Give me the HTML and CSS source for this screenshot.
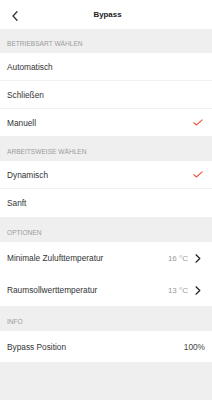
FILE: index.html
```html
<!DOCTYPE html>
<html lang="de">
<head>
<meta charset="utf-8">
<title>Bypass</title>
<link rel="stylesheet" href="styles.css">
</head>
<body>
<div class="app">
  <header class="nav">
    <svg class="back" width="6" height="10" viewBox="0 0 6 10"><path d="M5 0.8 L1 5 L5 9.2" fill="none" stroke="#333" stroke-width="1.3" stroke-linecap="round" stroke-linejoin="round"/></svg>
    <div class="title">Bypass</div>
  </header>

  <div class="sec first">BETRIEBSART WÄHLEN</div>
  <div class="group">
    <div class="row"><span class="label">Automatisch</span></div>
    <div class="row"><span class="label">Schließen</span></div>
    <div class="row short"><span class="label">Manuell</span><svg class="check" width="10" height="7" viewBox="0 0 10 7"><path d="M0.8 3.6 L3.4 6 L9.2 0.8" fill="none" stroke="#f2553a" stroke-width="1.1" stroke-linecap="round" stroke-linejoin="round"/></svg></div>
  </div>

  <div class="sec">ARBEITSWEISE WÄHLEN</div>
  <div class="group">
    <div class="row"><span class="label">Dynamisch</span><svg class="check" width="10" height="7" viewBox="0 0 10 7"><path d="M0.8 3.6 L3.4 6 L9.2 0.8" fill="none" stroke="#f2553a" stroke-width="1.1" stroke-linecap="round" stroke-linejoin="round"/></svg></div>
    <div class="row last"><span class="label">Sanft</span></div>
  </div>

  <div class="sec">OPTIONEN</div>
  <div class="group">
    <div class="row tall"><span class="label">Minimale Zulufttemperatur</span><span class="val">16 °C</span><svg class="chev" width="6" height="9" viewBox="0 0 6 9"><path d="M1 0.8 L4.8 4.5 L1 8.2" fill="none" stroke="#222" stroke-width="1.2" stroke-linecap="round" stroke-linejoin="round"/></svg></div>
    <div class="row tall"><span class="label">Raumsollwerttemperatur</span><span class="val">13 °C</span><svg class="chev" width="6" height="9" viewBox="0 0 6 9"><path d="M1 0.8 L4.8 4.5 L1 8.2" fill="none" stroke="#222" stroke-width="1.2" stroke-linecap="round" stroke-linejoin="round"/></svg></div>
  </div>

  <div class="sec">INFO</div>
  <div class="group">
    <div class="row info"><span class="label">Bypass Position</span><span class="val dark">100%</span></div>
  </div>
</div>
</body>
</html>
```

FILE: styles.css
```css
* { box-sizing: border-box; }
html, body { margin: 0; padding: 0; }
body {
  background: #efefef;
  font-family: "Liberation Sans", Arial, Helvetica, sans-serif;
  color: #333;
  width: 212px;
  height: 400px;
  overflow: hidden;
}
.app { display: flex; flex-direction: column; }
.nav {
  height: 29px;
  background: #fff;
  display: flex;
  align-items: center;
  justify-content: center;
  position: relative;
}
.back { position: absolute; left: 12px; top: 11px; }
.title { font-size: 7.9px; font-weight: bold; color: #222; margin-left: 3px; }
.sec {
  height: 25px;
  padding: 12px 0 0 7px;
  font-size: 6.6px;
  color: #9b9b9b;
  line-height: 8px;
}
.sec.first { height: 24px; padding-top: 11px; }
.group { background: #fff; }
.row {
  height: 28px;
  display: flex;
  align-items: center;
  padding: 0 7px;
  border-bottom: 1px solid #f1f1f1;
  font-size: 8.3px;
}
.row.short { height: 27px; border-bottom: none; }
.row.last { border-bottom: none; }
.row.tall { height: 32px; border-bottom: none; }
.row.info { height: 31px; border-bottom: none; }
.label { flex: 1; color: #333; }
.val { color: #9a9a9a; font-size: 8px; }
.val.dark { color: #444; font-size: 8.3px; }
.check { margin-right: 2px; }
.chev { margin-left: 7px; margin-right: 4px; }
```
